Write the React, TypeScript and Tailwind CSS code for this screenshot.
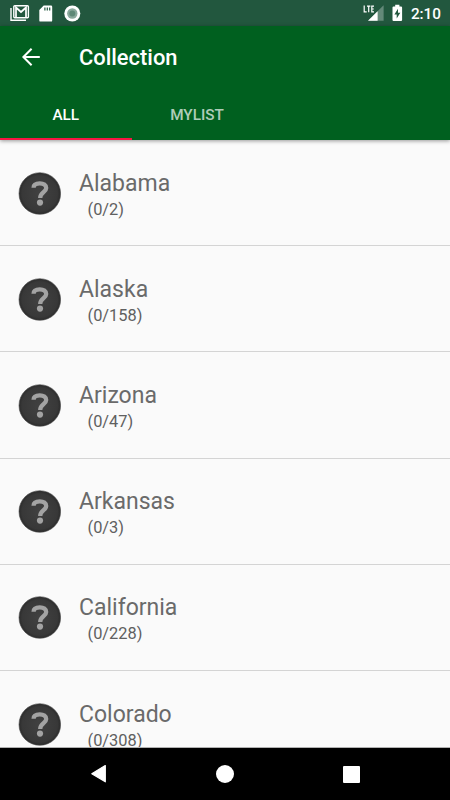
const states = [
  { name: "Alabama", found: 0, total: 2 },
  { name: "Alaska", found: 0, total: 158 },
  { name: "Arizona", found: 0, total: 47 },
  { name: "Arkansas", found: 0, total: 3 },
  { name: "California", found: 0, total: 228 },
  { name: "Colorado", found: 0, total: 308 },
];

function StatusBar() {
  return (
    <div className="flex h-[26px] shrink-0 items-center justify-between bg-[#22573e] pl-[10px] pr-[9px] text-white">
      <div className="flex items-center">
        {/* Gmail */}
        <svg width="20" height="18" viewBox="0 0 20 18" fill="none">
          <path d="M1 4V16.2H16" stroke="white" strokeWidth="1.4" />
          <rect x="3.8" y="1.8" width="14.6" height="11.9" rx="1" stroke="white" strokeWidth="1.4" />
          <path d="M6 13V3.5L11 8L16 3.5V13" stroke="white" strokeWidth="1.7" />
        </svg>
        {/* SD card */}
        <svg className="ml-[9px]" width="14" height="17" viewBox="0 0 14 17">
          <path d="M4.7 .5H12a1.2 1.2 0 0 1 1.2 1.2V15.4a1.2 1.2 0 0 1-1.2 1.2H1.5A1.2 1.2 0 0 1 .3 15.4V5z" fill="white" />
          <path d="M5.9 2.5v3M8.3 2.5v3M10.7 2.5v3" stroke="#22573e" strokeWidth="1.2" />
        </svg>
        {/* Sync dot */}
        <svg className="ml-[11px]" width="17" height="17" viewBox="0 0 17 17">
          <circle cx="8.3" cy="8.5" r="8" fill="white" />
          <circle cx="8.3" cy="8.5" r="5.2" fill="#8aa99c" />
          <circle cx="8.3" cy="8.5" r="3" fill="#5f8977" />
        </svg>
      </div>
      <div className="flex items-center">
        <svg width="22" height="18" viewBox="0 0 22 18">
          <path d="M20.6 1.3V16.8H5z" fill="#648979" />
          <path d="M14.6 7.3V16.8H5z" fill="white" />
          <path d="M1.2 1.5V7.8H3.7M4 2.2H7.4M5.7 2.2V8.2M11 2.2H8.8V7.8H11M8.8 5H10.8" fill="none" stroke="white" strokeWidth="1.2" />
        </svg>
        <svg className="ml-[7px]" width="11" height="18" viewBox="0 0 11 18">
          <path d="M3.2 .8h4.2v1.6H9a1.1 1.1 0 0 1 1.1 1.1V16a1.1 1.1 0 0 1-1.1 1.1H1.6A1.1 1.1 0 0 1 .5 16V3.5a1.1 1.1 0 0 1 1.1-1.1h1.6z" fill="white" />
          <path d="M6 4.7L2.4 10.4H4.7V14.6L8.3 8.8H6z" fill="#22573e" />
        </svg>
        <span className="ml-[8px] pt-[2px] text-[15.3px] leading-[24px] font-medium">2:10</span>
      </div>
    </div>
  );
}

function Header() {
  return (
    <header className="relative h-[114px] shrink-0 bg-[#00601f] text-white shadow-[0_1px_4px_rgba(0,0,0,0.4)]">
      <div className="flex h-[63px] items-center pl-[21px]">
        <svg className="mb-[2px]" width="20" height="20" viewBox="0 0 20 20" fill="none" stroke="white" strokeWidth="2">
          <path d="M18.8 10H2.5M10.6 1.8L2.4 10L10.6 18.2" />
        </svg>
        <h1 className="ml-[38px] pt-[2px] text-[21.9px] font-medium">Collection</h1>
      </div>
      <nav className="flex h-[51px] text-[15.3px] font-medium">
        <button className="w-[131.5px] border-b-[2.5px] border-[#f71643] pt-[3px]">ALL</button>
        <button className="w-[131px] border-b-[2.5px] border-transparent pt-[3px] text-white/70">MYLIST</button>
      </nav>
    </header>
  );
}

function UnknownBadge() {
  return (
    <svg className="mt-[1px] shrink-0" width="43" height="43" viewBox="0 0 43 43" fill="none">
      <defs>
        <radialGradient id="badge">
          <stop offset="0" stopColor="#414141" />
          <stop offset="0.85" stopColor="#383838" />
          <stop offset="1" stopColor="#2b2b2b" />
        </radialGradient>
      </defs>
      <circle cx="21.8" cy="21.5" r="20.8" fill="url(#badge)" stroke="#4a4a4a" strokeWidth="0.6" />
      <path d="M15.6 15.8C15.6 12.8 18 11.4 21.8 11.4C25.6 11.4 28.2 13.1 28.2 16.1C28.2 20.2 22.2 20.4 22.2 26" stroke="#a3a3a3" strokeWidth="4.3" />
      <circle cx="22" cy="30.6" r="3.1" fill="#a3a3a3" />
    </svg>
  );
}

function NavBar() {
  return (
    <div className="flex h-[52px] shrink-0 items-center bg-black pl-[91px]">
      <svg width="16" height="20" viewBox="0 0 16 20">
        <path d="M14.3 1.6V17.8L.8 9.7z" fill="white" stroke="white" strokeWidth="1.2" strokeLinejoin="round" />
      </svg>
      <div className="ml-[109px] size-[18px] rounded-full bg-white" />
      <div className="ml-[109px] size-[17px] rounded-[1px] bg-white" />
    </div>
  );
}

export default function App() {
  return (
    <div className="flex h-[800px] w-[450px] flex-col overflow-hidden bg-[#fafafa] font-[Roboto,sans-serif]">
      <StatusBar />
      <Header />
      <ul className="min-h-0 flex-1 overflow-hidden border-b border-[#b0b0b0]">
        {states.map((s) => (
          <li key={s.name} className="flex h-[106.2px] items-center border-b border-[#d4d4d4] pl-[18px]">
            <UnknownBadge />
            <div className="ml-[18px] pt-[7px]">
              <div className="text-[23px] leading-[27px] text-[#6a6a6a]">{s.name}</div>
              <div className="pl-[8.5px] text-[16.4px] leading-[26px] text-[#606060]">
                ({s.found}/{s.total})
              </div>
            </div>
          </li>
        ))}
      </ul>
      <NavBar />
    </div>
  );
}
